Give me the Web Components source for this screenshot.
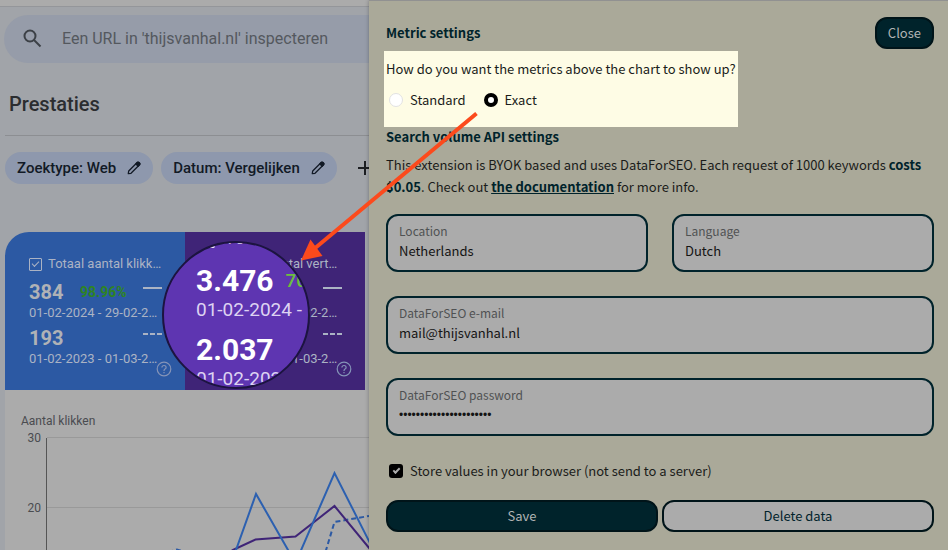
<!DOCTYPE html>
<html lang="nl">
<head>
<meta charset="utf-8">
<title>Prestaties</title>
<style>
  body { margin: 0; }
</style>
</head>
<body>
<metrics-page>
  <search-console slot="console"></search-console>
  <settings-panel slot="panel"></settings-panel>
</metrics-page>

<script>
(function() {
    'use strict';

class MetricsPage extends HTMLElement {
    constructor() {
        super();
        this.attachShadow({ mode: 'open' }).innerHTML = `
      <style>
        :host {
          display: grid;
          grid-template-columns: 369px 1fr;
          height: 100vh;
          overflow: hidden;
          position: relative;
          background: #a1a4a9;
        }
        .arrow {
          position: absolute;
          left: 300px; top: 110px;
          pointer-events: none;
        }
      </style>
      <slot name="console"></slot>
      <slot name="panel"></slot>
      <svg class="arrow" width="180" height="152" viewBox="300 110 180 152" aria-hidden="true">
        <path d="M476.500 113.500L314 249" stroke="#fc4a1c" stroke-width="4" fill="none"/>
        <path d="M301 260.500L310.500 239.500L322.500 256z" fill="#fc4a1c"/>
      </svg>
    `;
    }
}

customElements.define('metrics-page', MetricsPage);

class FilterChip extends HTMLElement {
    constructor() {
        super();
        this.attachShadow({ mode: 'open' }).innerHTML = `
      <style>
        :host { display: block; flex: none; }
        button {
          display: flex;
          align-items: center;
          gap: 11px;
          height: 32px;
          padding: 0 12px;
          border: 0;
          border-radius: 16px;
          background: #8e98ad;
          color: #121a26;
          font: 500 15px/20px Roboto, sans-serif;
          white-space: nowrap;
        }
      </style>
      <button type="button">
        <slot></slot>
        <svg width="14" height="14" viewBox="0 0 14 14" fill="none" stroke="#121a26" stroke-width="1.300" stroke-linejoin="round" aria-hidden="true">
          <path d="M1.300 12.700L1.700 10L10.200 1.500Q11 0.800 11.800 1.500L12.500 2.200Q13.200 3 12.500 3.800L4 12.300z"/>
          <path d="M8.800 2.900L11.100 5.200L12.700 3.500Q13.200 2.700 12.500 2L12 1.500Q11.200 0.800 10.500 1.300z" fill="#121a26"/>
        </svg>
      </button>
    `;
    }
}

customElements.define('filter-chip', FilterChip);

class MetricCard extends HTMLElement {
    constructor() {
        super();
        this.attachShadow({ mode: 'open' });
    }

    connectedCallback() {
        const value = this.getAttribute('value');
        const change = this.getAttribute('change');
        const previous = this.getAttribute('previous');

        this.shadowRoot.innerHTML = `
      <style>
        :host {
          display: block;
          box-sizing: border-box;
          width: 180px;
          height: 158px;
          padding: 22px 23px 0 24px;
          position: relative;
          color: #abb3c4;
          font: 13px/20px Roboto, sans-serif;
          white-space: nowrap;
        }
        label { display: flex; align-items: center; gap: 6px; }
        input {
          appearance: none;
          box-sizing: border-box;
          width: 13px; height: 13px;
          margin: 0;
          border: 1px solid #abb3c4;
          border-radius: 1px;
          display: grid;
          place-items: center;
        }
        input:checked::before {
          content: '';
          width: 6px; height: 3px;
          border: solid #abb3c4;
          border-width: 0 0 1px 1px;
          transform: translateY(-1px) rotate(-45deg);
        }
        .row {
          display: flex;
          align-items: center;
          height: 26px;
          margin-top: 5px;
        }
        .date + .row { margin-top: 4px; }
        .row b { width: 51px; font-size: 20px; color: #b0b2b6; }
        .row span { font-weight: 700; font-size: 14px; color: #2f8422; }
        .row i {
          width: 19px;
          margin: 0 0 8px auto;
          border-top: 2px solid #abb3c4;
        }
        .row i.dashed {
          height: 2px;
          border: 0;
          background: repeating-linear-gradient(90deg, #abb3c4 0 5px, transparent 5px 7px);
        }
        .date { height: 16px; line-height: 16px; }
        .help { position: absolute; right: 13px; bottom: 13px; }
      </style>
      <label><input type="checkbox" checked><slot></slot></label>
      <div class="row"><b>${value}</b><span>${change}</span><i></i></div>
      <div class="date">01-02-2024 - 29-02-2…</div>
      <div class="row"><b>${previous}</b><i class="dashed"></i></div>
      <div class="date">01-02-2023 - 01-03-2…</div>
      <svg class="help" width="16" height="16" viewBox="0 0 16 16" fill="none" stroke="#8594b8" stroke-width="1.200" aria-hidden="true">
        <circle cx="8" cy="8" r="6.800"/>
        <path d="M5.900 6.500Q6 4.500 8 4.500Q10.100 4.500 10.100 6.400Q10.100 7.400 9 8.100Q8 8.800 8 9.900M8 11V12.300"/>
      </svg>
    `;
    }
}

customElements.define('metric-card', MetricCard);

class MetricLens extends HTMLElement {
    constructor() {
        super();
        this.attachShadow({ mode: 'open' }).innerHTML = `
      <style>
        :host {
          display: block;
          box-sizing: border-box;
          width: 148px; height: 148px;
          padding-left: 32px;
          border: 2px solid #1c1440;
          border-radius: 50%;
          background: #5e35b1;
          overflow: hidden;
          color: #ddd3f2;
          font: 19px/24px Roboto, sans-serif;
          white-space: nowrap;
        }
        .top {
          display: flex;
          align-items: center;
          gap: 9px;
          margin-top: -17px;
        }
        .top i {
          box-sizing: border-box;
          width: 19px; height: 19px;
          border: 2px solid #fff;
          border-radius: 2px;
        }
        .value {
          display: flex;
          align-items: center;
          gap: 12px;
          height: 34px;
          margin-top: 11px;
        }
        .top + .value { margin-top: 14px; }
        .value b { font-size: 30px; color: #fff; }
        .value span { font-weight: 500; color: #6cbf3f; }
      </style>
      <div class="top"><i></i>Totaal</div>
      <div class="value"><b>3.476</b><span>70.64%</span></div>
      <div>01-02-2024 -</div>
      <div class="value"><b>2.037</b></div>
      <div>01-02-2023</div>
    `;
    }
}

customElements.define('metric-lens', MetricLens);

class ClicksChart extends HTMLElement {
    constructor() {
        super();
        this.attachShadow({ mode: 'open' }).innerHTML = `
      <style>
        :host {
          display: block;
          padding-top: 22px;
          background: #ababab;
          color: #4a4c50;
          font: 12px/18px Roboto, sans-serif;
        }
        h2 { margin: 0 0 0 16px; font: inherit; }
        svg { display: block; }
      </style>
      <h2>Aantal klikken</h2>
      <svg width="364" height="240" viewBox="5 430 364 240" fill="none" stroke-width="2">
        <path d="M47 437.500H369M47 507.500H369" stroke="#999" stroke-width="1"/>
        <path d="M46.500 438V648" stroke="#555" stroke-width="1"/>
        <g fill="#4a4c50" text-anchor="end">
          <text x="41" y="442">30</text>
          <text x="41" y="512">20</text>
        </g>
        <path d="M138 562L177 549.500L216 562M314 590L334.500 522L369 516" stroke="#2c59a3" stroke-dasharray="5 3"/>
        <path d="M177 570L216 560L233 550L255.500 539.500L295.500 536.500L334.500 506L374 554" stroke="#3f2477"/>
        <path d="M216 606L256 494L295.500 563L334.500 473L374 551" stroke="#2c60b0"/>
      </svg>
    `;
    }
}

customElements.define('clicks-chart', ClicksChart);

class SearchConsole extends HTMLElement {
    constructor() {
        super();
        this.attachShadow({ mode: 'open' }).innerHTML = `
      <style>
        :host {
          display: block;
          min-width: 0;
          overflow: hidden;
          font-family: Roboto, sans-serif;
        }
        .topbar { height: 6px; background: #ababab; border-bottom: 1px solid #94969a; }
        .search {
          display: flex;
          align-items: center;
          gap: 18px;
          height: 48px;
          margin: 8px 0 0 4px;
          padding-left: 18px;
          border-radius: 24px 0 0 24px;
          background: #969ca9;
        }
        .search input {
          flex: 1;
          min-width: 0;
          padding: 0;
          border: 0;
          background: none;
          font: 16px/24px Roboto, sans-serif;
        }
        .search input::placeholder { color: #54585e; opacity: 1; }
        h1 {
          margin: 28px 0 18px 9px;
          font: 500 20px/26px Roboto, sans-serif;
          color: #2b2d30;
        }
        hr { margin: 0 0 0 5px; border: 0; border-top: 1px solid #8c8e92; }
        .filters {
          display: flex;
          align-items: center;
          gap: 8px;
          margin: 16px 0 48px 5px;
        }
        .add {
          flex: none;
          width: 24px; height: 24px;
          margin-left: 8px;
          padding: 0;
          border: 0;
          background: none;
        }
        .cards {
          display: flex;
          position: relative;
          margin-left: 5px;
        }
        .clicks { background: #2c59a3; border-radius: 24px 0 0 0; }
        .views { background: #3f2477; }
        metric-lens { position: absolute; left: 157px; top: 9px; }
        clicks-chart { margin-left: 5px; }
      </style>
      <div class="topbar"></div>
      <div class="search">
        <svg width="22" height="22" viewBox="0 0 22 22" fill="none" stroke="#3c4046" stroke-width="2" aria-hidden="true">
          <circle cx="8" cy="8" r="5.500"/>
          <path d="M12 12L18.500 18.500"/>
        </svg>
        <input type="text" aria-label="URL inspecteren" placeholder="Een URL in 'thijsvanhal.nl' inspecteren">
      </div>
      <h1>Prestaties</h1>
      <hr>
      <div class="filters">
        <filter-chip>Zoektype: Web</filter-chip>
        <filter-chip>Datum: Vergelijken</filter-chip>
        <button class="add" type="button" aria-label="Nieuw">
          <svg width="24" height="24" viewBox="0 0 24 24" stroke="#1c1e22" stroke-width="2" aria-hidden="true">
            <path d="M5 12H19M12 5V19"/>
          </svg>
        </button>
      </div>
      <div class="cards">
        <metric-card class="clicks" value="384" change="98.96%" previous="193">Totaal aantal klikk…</metric-card>
        <metric-card class="views" value="3.476" change="70.64%" previous="2.037">Totaal aantal vert…</metric-card>
        <metric-lens></metric-lens>
      </div>
      <clicks-chart></clicks-chart>
    `;
    }
}

customElements.define('search-console', SearchConsole);

class PanelButton extends HTMLElement {
    connectedCallback() {
        const variant = this.getAttribute('variant') || 'filled';
        const colors = variant === 'outline'
            ? 'background: #ababab; color: #00232b;'
            : 'background: #00232b; color: #b0b4b4;';

        this.attachShadow({ mode: 'open' }).innerHTML = `
      <style>
        :host { display: block; }
        button {
          ${colors}
          box-sizing: border-box;
          width: 100%;
          height: 32px;
          padding: 0 11px;
          border: 2px solid #001419;
          border-radius: 12px;
          font: 13px/20px "Noto Sans CJK SC", sans-serif;
        }
      </style>
      <button type="button"><slot></slot></button>
    `;
    }
}

customElements.define('panel-button', PanelButton);

class FloatField extends HTMLElement {
    connectedCallback() {
        const type = this.getAttribute('type') || 'text';
        const label = this.getAttribute('label');
        const value = this.getAttribute('value');

        this.attachShadow({ mode: 'open' }).innerHTML = `
      <style>
        :host {
          display: block;
          box-sizing: border-box;
          min-width: 0;
          height: 58px;
          padding: 5px 11px;
          border: 2px solid #00232b;
          border-radius: 12px;
          background: #ababab;
        }
        label { display: block; font-size: 12px; line-height: 20px; color: #505253; }
        input {
          display: block;
          box-sizing: border-box;
          width: 100%;
          height: 20px;
          padding: 0;
          border: 0;
          background: none;
          color: #141414;
          font: 13px/20px "Noto Sans CJK SC", sans-serif;
        }
        input[type=password] { font: 12px/20px "Liberation Sans", sans-serif; }
      </style>
      <label for="field">${label}</label>
      <input id="field" type="${type}" value="${value}">
    `;
    }
}

customElements.define('float-field', FloatField);

class SettingsPanel extends HTMLElement {
    constructor() {
        super();
        this.attachShadow({ mode: 'open' }).innerHTML = `
      <style>
        :host {
          display: block;
          min-width: 0;
          padding: 16px 14px 16px 17px;
          border-top: 1px solid #919191;
          background: #aaa999;
          box-shadow: 0 0 4px rgba(0, 0, 0, 0.3);
          color: #1a1c1a;
          font: 13px/22px "Noto Sans CJK SC", sans-serif;
        }
        header { display: flex; align-items: center; justify-content: space-between; }
        h2 { margin: 0; font-size: 13px; line-height: 20px; color: #00232b; }
        p { margin: 0; }
        b, a { color: #00232b; font-weight: 700; }
        fieldset {
          box-sizing: border-box;
          width: fit-content;
          height: 76px;
          margin: 2px 0 0 -2px;
          padding: 7px 2px;
          border: 0;
          background: #fefce5;
        }
        legend { float: left; padding: 0; white-space: nowrap; }
        .radios { clear: both; display: flex; gap: 18px; padding: 9px 0 0 3px; }
        label { display: flex; align-items: center; gap: 7px; }
        input {
          appearance: none;
          box-sizing: border-box;
          width: 14px; height: 14px;
          margin: 0;
          background: #fff;
          border: 1px solid #e2e2e2;
          flex: none;
        }
        input[type=radio] { border-radius: 50%; }
        input[type=radio]:checked { border: 4px solid #000; }
        input[type=checkbox] {
          display: grid;
          place-items: center;
          border: 0;
          border-radius: 3px;
          background: #000;
        }
        input[type=checkbox]::before {
          content: '';
          width: 5px; height: 2px;
          border: solid #ababab;
          border-width: 0 0 2px 2px;
          transform: translateY(-1px) rotate(-45deg);
        }
        .intro { margin: 7px 0 16px; }
        .fields { display: grid; grid-template-columns: 1fr 1fr; gap: 24px; }
        .wide { grid-column: 1 / -1; }
        .store { margin: 24px 0 18px 3px; }
        .actions { display: grid; grid-template-columns: 1fr 1fr; gap: 4px; }
      </style>
      <header>
        <h2>Metric settings</h2>
        <panel-button>Close</panel-button>
      </header>
      <fieldset>
        <legend>How do you want the metrics above the chart to show up?</legend>
        <div class="radios">
          <label><input type="radio" name="metrics">Standard</label>
          <label><input type="radio" name="metrics" checked>Exact</label>
        </div>
      </fieldset>
      <h2>Search volume API settings</h2>
      <p class="intro">This extension is BYOK based and uses DataForSEO. Each request of 1000 keywords <b>costs $0.05</b>. Check out <a href="#docs">the documentation</a> for more info.</p>
      <div class="fields">
        <float-field label="Location" value="Netherlands"></float-field>
        <float-field label="Language" value="Dutch"></float-field>
        <float-field class="wide" type="email" label="DataForSEO e-mail" value="mail@thijsvanhal.nl"></float-field>
        <float-field class="wide" type="password" label="DataForSEO password" value="abcdefghijklmnopqrstuv"></float-field>
      </div>
      <label class="store"><input type="checkbox" checked>Store values in your browser (not send to a server)</label>
      <div class="actions">
        <panel-button>Save</panel-button>
        <panel-button variant="outline">Delete data</panel-button>
      </div>
    `;
    }
}

customElements.define('settings-panel', SettingsPanel);

})();
</script>
</body>
</html>
